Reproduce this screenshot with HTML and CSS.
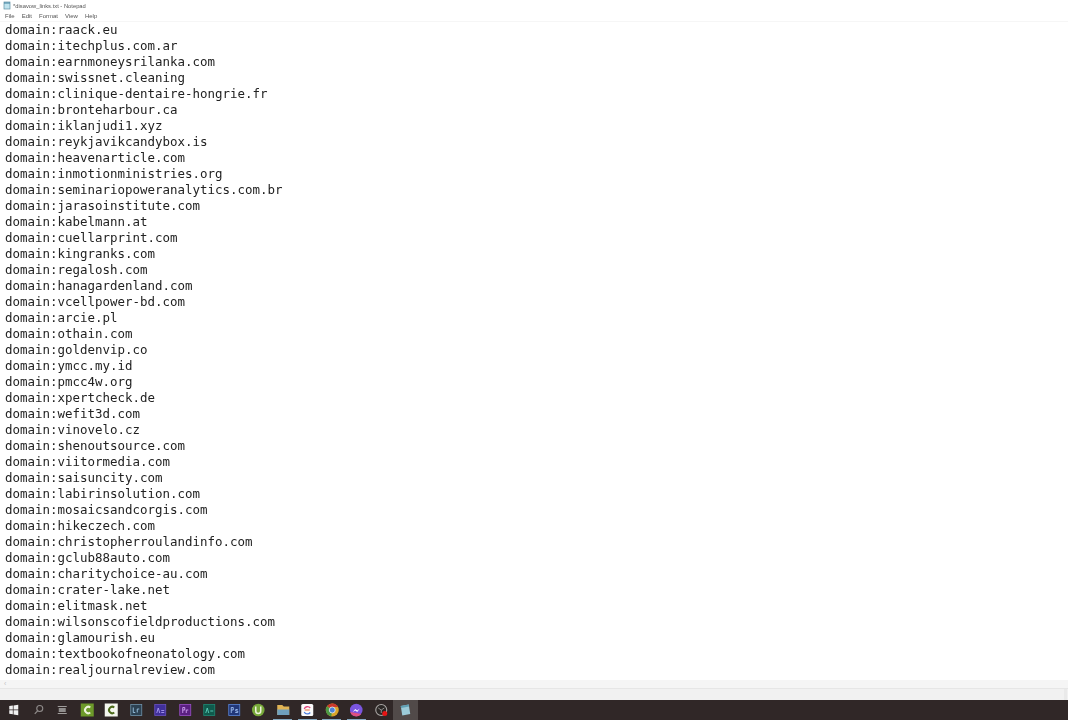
FILE: index.html
```html
<!DOCTYPE html>
<html lang="en">
<head>
<meta charset="utf-8">
<title>disavow_links.txt - Notepad</title>
<link rel="stylesheet" href="styles.css">
</head>
<body>
<div class="window">
  <div class="titlebar">
    <svg class="note-icon" width="8" height="9" viewBox="0 0 8 9"><rect x="1" y="1" width="6" height="7" fill="#bfe3ee" stroke="#5f8fa3" stroke-width="0.7"/><path d="M1 2h6" stroke="#3f7f9b" stroke-width="1"/></svg>
    <span>*disavow_links.txt - Notepad</span>
  </div>
  <div class="menubar"><span>File</span><span>Edit</span><span>Format</span><span>View</span><span>Help</span></div>
  <pre class="editor">domain:raack.eu
domain:itechplus.com.ar
domain:earnmoneysrilanka.com
domain:swissnet.cleaning
domain:clinique-dentaire-hongrie.fr
domain:bronteharbour.ca
domain:iklanjudi1.xyz
domain:reykjavikcandybox.is
domain:heavenarticle.com
domain:inmotionministries.org
domain:seminariopoweranalytics.com.br
domain:jarasoinstitute.com
domain:kabelmann.at
domain:cuellarprint.com
domain:kingranks.com
domain:regalosh.com
domain:hanagardenland.com
domain:vcellpower-bd.com
domain:arcie.pl
domain:othain.com
domain:goldenvip.co
domain:ymcc.my.id
domain:pmcc4w.org
domain:xpertcheck.de
domain:wefit3d.com
domain:vinovelo.cz
domain:shenoutsource.com
domain:viitormedia.com
domain:saisuncity.com
domain:labirinsolution.com
domain:mosaicsandcorgis.com
domain:hikeczech.com
domain:christopherroulandinfo.com
domain:gclub88auto.com
domain:charitychoice-au.com
domain:crater-lake.net
domain:elitmask.net
domain:wilsonscofieldproductions.com
domain:glamourish.eu
domain:textbookofneonatology.com
domain:realjournalreview.com</pre>
  <div class="hscroll"><span class="arrow">‹</span></div>
  <div class="statusbar"><span class="grip"></span></div>
</div>
<div class="taskbar">
  <svg class="slot" viewBox="0 0 24 20"><path d="M8 6l3.600-.5v4H8zM12.300 5.400L17 4.700v4.800h-4.700zM8 10.200h3.600v4L8 13.700zM12.300 10.200H17v5l-4.700-.7z" fill="#f1f1f1"/></svg>
  <svg class="slot" viewBox="0 0 24 20"><circle cx="13.500" cy="8.500" r="3" fill="none" stroke="#8f8b8a" stroke-width="1.100"/><path d="M11.300 10.800l-2.800 3" stroke="#8f8b8a" stroke-width="1.200"/></svg>
  <svg class="slot" viewBox="0 0 24 20"><path d="M7.500 6.500h9M7.500 13.500h9" stroke="#a09d9c" stroke-width="1.100"/><rect x="8.500" y="8" width="7" height="4" fill="#8f8d8c"/></svg>
  <svg class="slot" viewBox="0 0 24 20"><rect x="5.500" y="3.500" width="13" height="13" fill="#6d9a2a"/><path d="M15 7.500a3.200 3.200 0 1 0 0 5" fill="none" stroke="#eef4dc" stroke-width="2"/></svg>
  <svg class="slot" viewBox="0 0 24 20"><rect x="5.500" y="3.500" width="13" height="13" fill="#f4f6ee"/><path d="M15 7.500a3.200 3.200 0 1 0 0 5" fill="none" stroke="#4c6a1a" stroke-width="2"/></svg>
  <svg class="slot" viewBox="0 0 24 20"><rect x="6.500" y="4.500" width="11" height="11" fill="#2c4152" stroke="#6f93ab" stroke-width="0.8"/><path d="M9 7.500v5h2M13 12.500v-3.500h2" fill="none" stroke="#9cc6e4" stroke-width="0.9"/></svg>
  <svg class="slot" viewBox="0 0 24 20"><rect x="6.500" y="4.500" width="11" height="11" fill="#40309a" stroke="#6a52c0" stroke-width="0.8"/><path d="M8.500 13l1.500-5 1.500 5M13 10.500h3M13 12.500h3" fill="none" stroke="#a99af0" stroke-width="0.9"/></svg>
  <svg class="slot" viewBox="0 0 24 20"><rect x="6.500" y="4.500" width="11" height="11" fill="#5a1f80" stroke="#9a50c8" stroke-width="0.8"/><path d="M9.500 13V7.500h2v2.500h-2M13 13v-3h2" fill="none" stroke="#d0a0f0" stroke-width="0.9"/></svg>
  <svg class="slot" viewBox="0 0 24 20"><rect x="6.500" y="4.500" width="11" height="11" fill="#0f5a4c" stroke="#1f8a75" stroke-width="0.8"/><path d="M8.500 13l1.500-5 1.500 5M13 11h3" fill="none" stroke="#5fd0bb" stroke-width="0.9"/></svg>
  <svg class="slot" viewBox="0 0 24 20"><rect x="6.500" y="4.500" width="11" height="11" fill="#22387a" stroke="#5a86d8" stroke-width="0.8"/><path d="M9 13V7.500h2v2.500h-2M15.500 9.500h-2v1.500h2v1.500h-2.500" fill="none" stroke="#9fc0f0" stroke-width="0.9"/></svg>
  <svg class="slot" viewBox="0 0 24 20"><circle cx="12" cy="10" r="6.300" fill="#78a93a"/><path d="M9.500 6.500v4.500a2.500 2.500 0 0 0 5 0V6.500" fill="none" stroke="#eef4dc" stroke-width="1.500"/></svg>
  <svg class="slot running" viewBox="0 0 24 20"><path d="M6 5h5l1.500 1.500H18V15H6z" fill="#e0b354"/><rect x="6" y="9.500" width="12" height="5.500" fill="#6fa0bd"/></svg>
  <svg class="slot running" viewBox="0 0 24 20"><rect x="6" y="4" width="12" height="12" rx="1.500" fill="#fafafa"/><path d="M15 8a3.500 3.500 0 0 0-6 1" fill="none" stroke="#e0457b" stroke-width="1.300"/><path d="M9 12a3.500 3.500 0 0 0 6 .5" fill="none" stroke="#4f7fe0" stroke-width="1.300"/><path d="M9.500 10h5" stroke="#e8703a" stroke-width="1"/></svg>
  <svg class="slot running" viewBox="0 0 24 20"><circle cx="12" cy="10" r="6.500" fill="#d9a52a"/><path d="M12 10L6.800 6.200A6.500 6.500 0 0 1 17.800 7H12z" fill="#c9382c"/><path d="M12 10L6.800 6.200A6.500 6.500 0 0 0 11 16.400z" fill="#4b9a45"/><circle cx="12" cy="10" r="3" fill="#4a83d8" stroke="#eee" stroke-width="0.8"/></svg>
  <svg class="slot running" viewBox="0 0 24 20"><circle cx="12" cy="10" r="6.300" fill="#7a55e0"/><path d="M6 12a6.300 6.300 0 0 0 11 2" fill="#e0507f"/><path d="M8.500 12l2.500-3 2 1.500 2.500-2-2.500 3.500-2-1.500z" fill="#fff"/></svg>
  <svg class="slot" viewBox="0 0 24 20"><circle cx="12" cy="10" r="5.500" fill="#2b2726" stroke="#aaa6a5" stroke-width="1.100"/><path d="M12 10l3-2M12 10l-3-2M12 10v3" stroke="#aaa6a5" stroke-width="0.8"/><circle cx="15.500" cy="13.500" r="2.500" fill="#e81414"/></svg>
  <svg class="slot active" viewBox="0 0 24 20"><path d="M7.500 6l8-1.500 1.500 9.500-8 1.500z" fill="#9ccbd8"/><path d="M7.500 6l8-1.500.3 2-8 1.500z" fill="#5f9fb3"/></svg>
</div>
</body>
</html>
```

FILE: styles.css
```css
html, body {
  margin: 0;
  padding: 0;
  height: 100%;
  background: #fff;
  overflow: hidden;
}
body {
  display: flex;
  flex-direction: column;
  height: 720px;
  font-family: "Liberation Sans", Arial, sans-serif;
}
.window {
  flex: 1;
  display: flex;
  flex-direction: column;
  min-height: 0;
}
.titlebar {
  height: 11px;
  display: flex;
  align-items: center;
  gap: 2px;
  padding: 0 0 0 3px;
  font-size: 5.800px;
  color: #555;
  filter: blur(0.35px);
}
.note-icon { flex: none; }
.menubar {
  height: 10px;
  display: flex;
  align-items: center;
  gap: 7px;
  padding: 0 0 0 5px;
  font-size: 6px;
  color: #555;
  border-bottom: 1px solid #f6f6f6;
  filter: blur(0.35px);
}
.editor {
  flex: 1;
  margin: 0;
  padding: 0 0 0 5px;
  font-family: "DejaVu Sans Mono", monospace;
  font-size: 12.460px;
  line-height: 16px;
  color: #222;
  overflow: hidden;
  filter: blur(0.35px);
}
.hscroll {
  height: 8px;
  background: #f5f5f5;
  border-bottom: 1px solid #e6e6e6;
  display: flex;
  align-items: center;
  padding-left: 4px;
}
.arrow {
  font-size: 7px;
  line-height: 8px;
  color: #c4c4c4;
}
.statusbar {
  height: 11px;
  background: #f1f1f1;
  display: flex;
  justify-content: flex-end;
}
.grip {
  width: 3px;
  margin-right: 1px;
  background: #e9e9e9;
}
.taskbar {
  flex: none;
  height: 20px;
  background: #302727;
  display: flex;
  padding-left: 1px;
}
.slot {
  width: 24.500px;
  height: 20px;
  flex: none;
  filter: blur(0.4px);
}
.running {
  background: linear-gradient(#86aac2, #86aac2) center bottom / 19px 1px no-repeat;
}
.active {
  background: #514a49;
}
```
